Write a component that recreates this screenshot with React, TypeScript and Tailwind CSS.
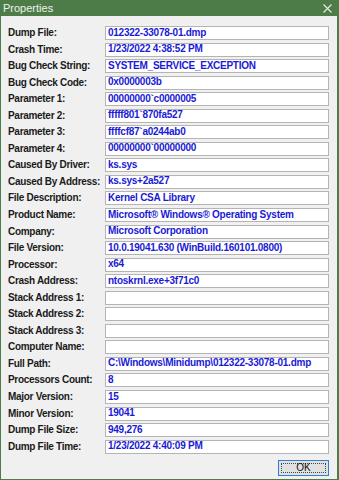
import React from "react";

const rows: [string, string][] = [
  ["Dump File:", "012322-33078-01.dmp"],
  ["Crash Time:", "1/23/2022 4:38:52 PM"],
  ["Bug Check String:", "SYSTEM_SERVICE_EXCEPTION"],
  ["Bug Check Code:", "0x0000003b"],
  ["Parameter 1:", "00000000`c0000005"],
  ["Parameter 2:", "fffff801`870fa527"],
  ["Parameter 3:", "ffffcf87`a0244ab0"],
  ["Parameter 4:", "00000000`00000000"],
  ["Caused By Driver:", "ks.sys"],
  ["Caused By Address:", "ks.sys+2a527"],
  ["File Description:", "Kernel CSA Library"],
  ["Product Name:", "Microsoft® Windows® Operating System"],
  ["Company:", "Microsoft Corporation"],
  ["File Version:", "10.0.19041.630 (WinBuild.160101.0800)"],
  ["Processor:", "x64"],
  ["Crash Address:", "ntoskrnl.exe+3f71c0"],
  ["Stack Address 1:", ""],
  ["Stack Address 2:", ""],
  ["Stack Address 3:", ""],
  ["Computer Name:", ""],
  ["Full Path:", "C:\\Windows\\Minidump\\012322-33078-01.dmp"],
  ["Processors Count:", "8"],
  ["Major Version:", "15"],
  ["Minor Version:", "19041"],
  ["Dump File Size:", "949,276"],
  ["Dump File Time:", "1/23/2022 4:40:09 PM"],
];

export default function App() {
  return (
    <div
      className="w-[339px] h-[480px] bg-[#4d7c48] flex flex-col overflow-hidden"
      style={{ fontFamily: '"Liberation Sans", Arial, sans-serif' }}
    >
      <div className="h-[16px] flex items-center justify-between pl-[3px] pr-[6px] shrink-0">
        <span className="text-[11px] leading-none text-white/90">Properties</span>
        <svg width="9" height="9" viewBox="0 0 9 9" className="mr-[1px]">
          <path d="M0.5 0.5 L8.5 8.5 M8.5 0.5 L0.5 8.5" stroke="#e6ede5" strokeWidth="1.1" />
        </svg>
      </div>
      <div className="flex-1 ml-[1px] mr-[2px] mb-[1px] bg-[#f0f0f0] flex flex-col pt-[10px] pl-[7px] pr-[8px]">
        <div className="flex flex-col gap-[2.55px]">
          {rows.map(([label, value]) => (
            <div key={label} className="flex items-center h-[14px]">
              <div className="w-[97px] shrink-0 text-[10px] font-bold text-[#1a1a1a] leading-none whitespace-nowrap tracking-[-0.3px]">
                {label}
              </div>
              <div className="flex-1 h-[14px] bg-white border border-[#b4b4b4] flex items-center pl-[2px] pb-[1px] text-[10px] font-bold text-[#1a1ad6] leading-none whitespace-nowrap overflow-hidden tracking-[-0.25px]">
                {value}
              </div>
            </div>
          ))}
        </div>
        <div className="flex justify-end mt-[6px]">
          <div className="w-[51px] h-[16px] border border-[#2b7fd9] bg-[#e1e1e1] p-[2px]">
            <div className="w-full h-full border border-dotted border-[#444] flex items-center justify-center text-[10px] text-[#111] leading-none">
              OK
            </div>
          </div>
        </div>
      </div>
    </div>
  );
}
